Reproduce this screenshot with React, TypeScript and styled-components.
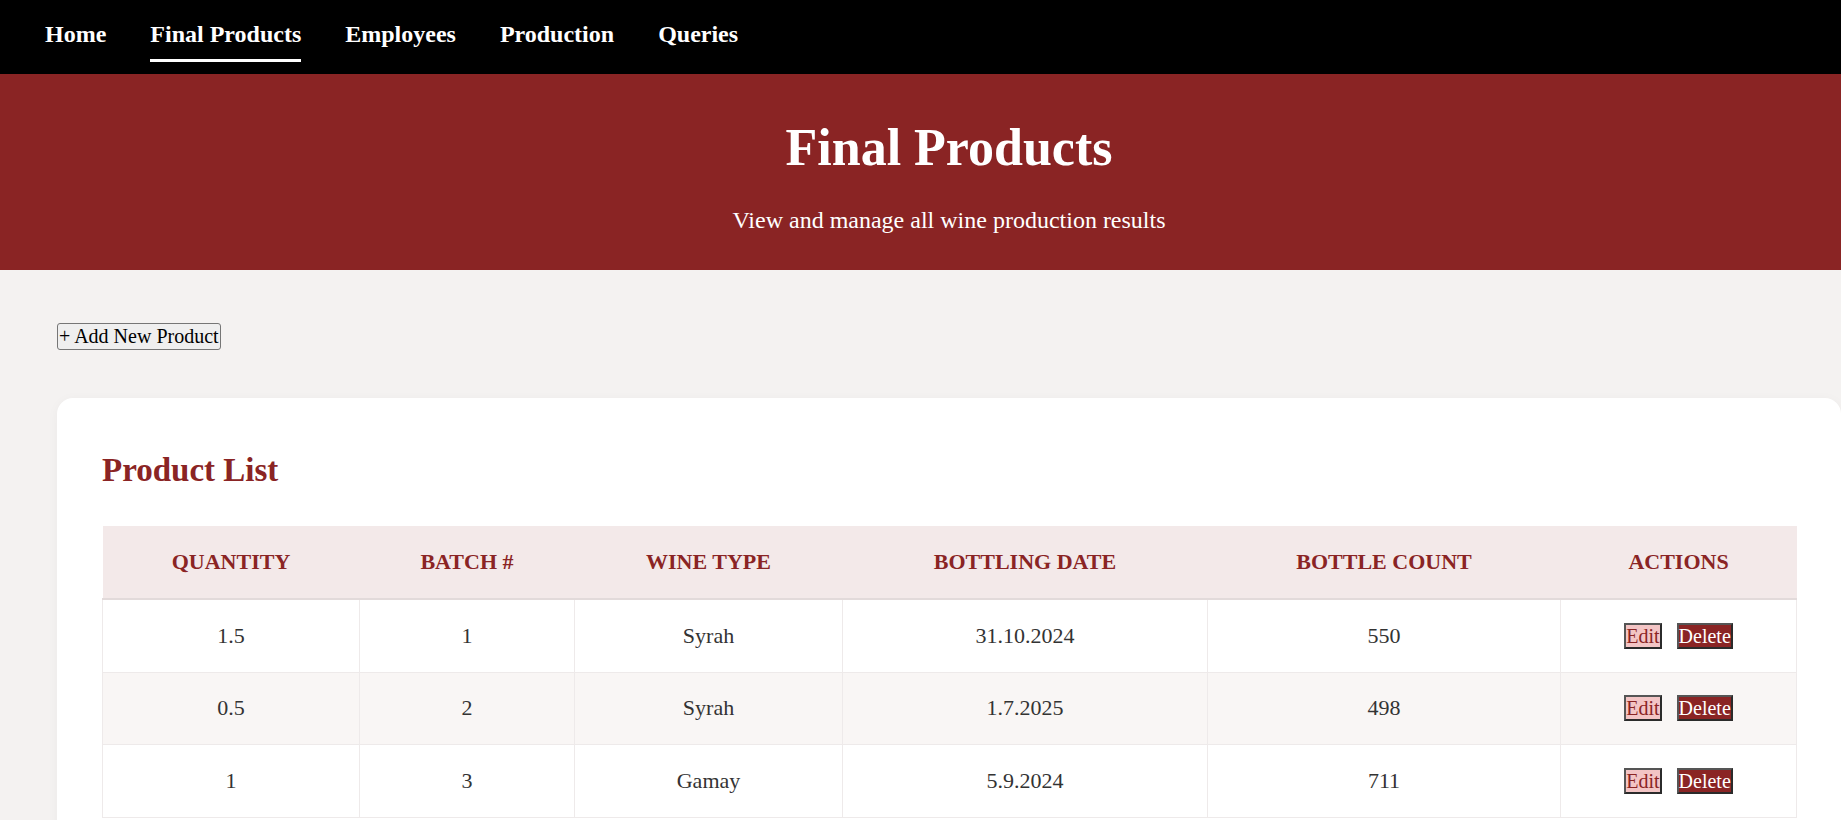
import React from "react";
import styled, { createGlobalStyle } from "styled-components";

const GlobalStyle = createGlobalStyle`
  html, body {
    margin: 0;
    padding: 0;
    background: #f4f2f1;
    font-family: "Liberation Serif", "Times New Roman", serif;
    color: #333;
  }
  * { box-sizing: border-box; }
`;

const Page = styled.div`
  width: 1898px;
`;

const Nav = styled.nav`
  height: 74px;
  background: #000;
  display: flex;
  align-items: flex-start;
  gap: 44px;
  padding: 20px 0 0 45px;
`;

const NavLink = styled.a<{ $active?: boolean }>`
  color: #fff;
  text-decoration: none;
  font-weight: 700;
  font-size: 24px;
  line-height: 28px;
  padding-bottom: 11px;
  border-bottom: 3px solid ${(p) => (p.$active ? "#fff" : "transparent")};
  cursor: pointer;
`;

const Hero = styled.header`
  background: #8a2424;
  color: #fff;
  text-align: center;
  padding: 44px 0 36px;
`;

const HeroTitle = styled.h1`
  margin: 0;
  font-size: 52px;
  font-weight: 700;
  line-height: normal;
`;

const HeroSubtitle = styled.p`
  margin: 30px 0 0;
  font-size: 24px;
  line-height: normal;
`;

const Main = styled.main`
  padding: 53px 57px 40px;
`;

const AddButton = styled.button`
  font-family: "Liberation Serif", "Times New Roman", serif;
  font-size: 20px;
  line-height: normal;
  color: #000;
  background: #efefef;
  border: 1px solid #767676;
  border-radius: 3px;
  padding: 1px 1px;
  cursor: pointer;
`;

const Card = styled.section`
  margin-top: 48px;
  background: #fff;
  border-radius: 16px;
  padding: 54px 45px 45px;
  box-shadow: 0 2px 12px rgba(0, 0, 0, 0.04);
`;

const CardTitle = styled.h2`
  margin: 0 0 37px;
  color: #8a2424;
  font-size: 33px;
  font-weight: 700;
  line-height: normal;
`;

const Table = styled.table`
  width: 100%;
  border-collapse: collapse;
  table-layout: fixed;
`;

const HeadCell = styled.th`
  background: #f3e9e9;
  color: #8a2424;
  font-size: 22px;
  font-weight: 700;
  text-transform: uppercase;
  padding: 23px 10px;
  line-height: normal;
  border-bottom: 2px solid #e2dada;
  text-align: center;
`;

const Row = styled.tr<{ $alt?: boolean }>`
  background: ${(p) => (p.$alt ? "#f9f6f5" : "#fff")};
`;

const Cell = styled.td`
  font-size: 22px;
  color: #333;
  text-align: center;
  padding: 22.8px 10px;
  line-height: normal;
  border: 1px solid #eeeaea;
`;

const Actions = styled.div`
  display: flex;
  justify-content: center;
  align-items: center;
  gap: 15px;
`;

const ActionButton = styled.button<{ $variant: "edit" | "delete" }>`
  font-family: "Liberation Serif", "Times New Roman", serif;
  font-size: 20px;
  line-height: 22px;
  padding: 0;
  border-width: 2px;
  border-style: solid;
  border-color: #555 #2b2b2b #2b2b2b #555;
  background: ${(p) => (p.$variant === "edit" ? "#f3c5c5" : "#8a2424")};
  color: ${(p) => (p.$variant === "edit" ? "#8a2424" : "#fff")};
  cursor: pointer;
`;

const columns = [
  { label: "Quantity", width: 257 },
  { label: "Batch #", width: 215 },
  { label: "Wine Type", width: 268 },
  { label: "Bottling Date", width: 365 },
  { label: "Bottle Count", width: 353 },
  { label: "Actions", width: 236 },
];

const products = [
  { quantity: "1.5", batch: "1", type: "Syrah", date: "31.10.2024", count: "550" },
  { quantity: "0.5", batch: "2", type: "Syrah", date: "1.7.2025", count: "498" },
  { quantity: "1", batch: "3", type: "Gamay", date: "5.9.2024", count: "711" },
];

const navItems = ["Home", "Final Products", "Employees", "Production", "Queries"];

export default function App() {
  return (
    <Page>
      <GlobalStyle />
      <Nav>
        {navItems.map((item) => (
          <NavLink key={item} $active={item === "Final Products"}>
            {item}
          </NavLink>
        ))}
      </Nav>
      <Hero>
        <HeroTitle>Final Products</HeroTitle>
        <HeroSubtitle>View and manage all wine production results</HeroSubtitle>
      </Hero>
      <Main>
        <AddButton>+ Add New Product</AddButton>
        <Card>
          <CardTitle>Product List</CardTitle>
          <Table>
            <colgroup>
              {columns.map((c) => (
                <col key={c.label} style={{ width: c.width }} />
              ))}
            </colgroup>
            <thead>
              <tr>
                {columns.map((c) => (
                  <HeadCell key={c.label}>{c.label}</HeadCell>
                ))}
              </tr>
            </thead>
            <tbody>
              {products.map((p, i) => (
                <Row key={p.batch} $alt={i % 2 === 1}>
                  <Cell>{p.quantity}</Cell>
                  <Cell>{p.batch}</Cell>
                  <Cell>{p.type}</Cell>
                  <Cell>{p.date}</Cell>
                  <Cell>{p.count}</Cell>
                  <Cell>
                    <Actions>
                      <ActionButton $variant="edit">Edit</ActionButton>
                      <ActionButton $variant="delete">Delete</ActionButton>
                    </Actions>
                  </Cell>
                </Row>
              ))}
            </tbody>
          </Table>
        </Card>
      </Main>
    </Page>
  );
}
